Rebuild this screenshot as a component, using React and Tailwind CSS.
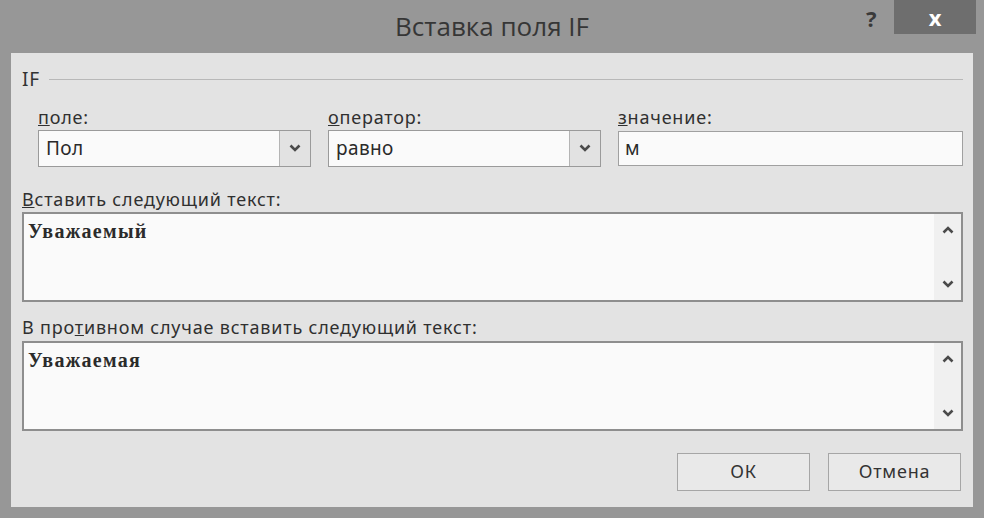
import { useState } from "react";

const ui = { fontFamily: '"Noto Sans", "Open Sans", sans-serif' };
const serif = { fontFamily: '"Liberation Serif", "DejaVu Serif", serif' };

function Chevron({ up = false, className = "" }) {
  return (
    <svg viewBox="0 0 12 8" className={className}>
      <path
        d={up ? "M1.5 6.5 L6 2 L10.5 6.5" : "M1.5 1.5 L6 6 L10.5 1.5"}
        fill="none"
        stroke="#4a4a4a"
        strokeWidth="2.6"
      />
    </svg>
  );
}

function Combo({ value }) {
  return (
    <div className="flex h-[37px] w-[273px] border border-[#9a9a9a] bg-[#fafafa]">
      <div className="flex flex-1 items-center pl-[7px] text-[19px] tracking-[0.4px] text-[#2a2a2a]">
        {value}
      </div>
      <div className="flex w-[31px] items-center justify-center border-l border-[#b4b4b4] bg-[#e2e2e2]">
        <Chevron className="h-[8px] w-[12px]" />
      </div>
    </div>
  );
}

function Memo({ text }) {
  return (
    <div className="flex h-[90px] border-2 border-[#8e8e8e] bg-[#fafafa]">
      <div
        className="flex-1 pl-[4px] pt-[2px] text-[20px] font-bold tracking-[1.3px] text-[#2b2b2b]"
        style={serif}
      >
        {text}
      </div>
      <div className="flex w-[27px] flex-col items-center justify-between bg-[#f0f0f0] py-[12px]">
        <Chevron up className="h-[8px] w-[12px]" />
        <Chevron className="h-[8px] w-[12px]" />
      </div>
    </div>
  );
}

export default function App() {
  const [field] = useState("Пол");

  return (
    <div className="flex h-[518px] w-[984px] flex-col bg-[#979797]" style={ui}>
      <div className="relative flex h-[53px] items-center justify-center">
        <span
          className="pb-[1px] text-[26px] text-[#363636]"
          style={{ fontFamily: '"Open Sans", sans-serif' }}
        >
          Вставка поля IF
        </span>
        <span className="absolute left-[866px] top-[2px] text-[22px] font-bold text-[#3a3a3a]">?</span>
        <div className="absolute left-[894px] top-0 flex h-[34px] w-[82px] items-center justify-center bg-[#6e6e6e] text-[22px] font-bold text-white">
          x
        </div>
      </div>

      <div className="mx-[11px] mb-[11px] flex flex-1 flex-col bg-[#e3e3e3] pl-[11px] pr-[10px] text-[18px] tracking-[0.8px] text-[#303030]">
        <div className="mt-[12px] flex items-center gap-[9px]">
          <span className="text-[19px] text-[#333]">IF</span>
          <div className="h-px flex-1 bg-[#b8b8b8]" />
        </div>

        <div className="mt-[10px] flex pl-[16px]">
          <div className="w-[290px]">
            <div className="h-[26px] leading-[26px]"><u>п</u>оле:</div>
            <Combo value={field} />
          </div>
          <div className="w-[290px]">
            <div className="h-[26px] leading-[26px]"><u>о</u>ператор:</div>
            <Combo value="равно" />
          </div>
          <div className="flex-1">
            <div className="h-[26px] leading-[26px]"><u>з</u>начение:</div>
            <div className="mt-px flex h-[35px] items-center border border-[#a0a0a0] bg-[#fafafa] pl-[6px] text-[19px] text-[#2a2a2a]">
              м
            </div>
          </div>
        </div>

        <div className="mt-[19px] h-[26px] leading-[26px]"><u>В</u>ставить следующий текст:</div>
        <Memo text="Уважаемый" />

        <div className="mt-[12px] h-[27px] leading-[27px]">
          В про<u>т</u>ивном случае вставить следующий текст:
        </div>
        <Memo text="Уважаемая" />

        <div className="mt-[22px] flex justify-end gap-[18px] pr-[2px]">
          <button className="h-[38px] w-[133px] border border-[#a6a6a6] bg-[#e9e9e9] text-[18px] text-[#333]">
            ОК
          </button>
          <button className="h-[38px] w-[133px] border border-[#a6a6a6] bg-[#e9e9e9] text-[18px] text-[#333]">
            Отмена
          </button>
        </div>
      </div>
    </div>
  );
}
